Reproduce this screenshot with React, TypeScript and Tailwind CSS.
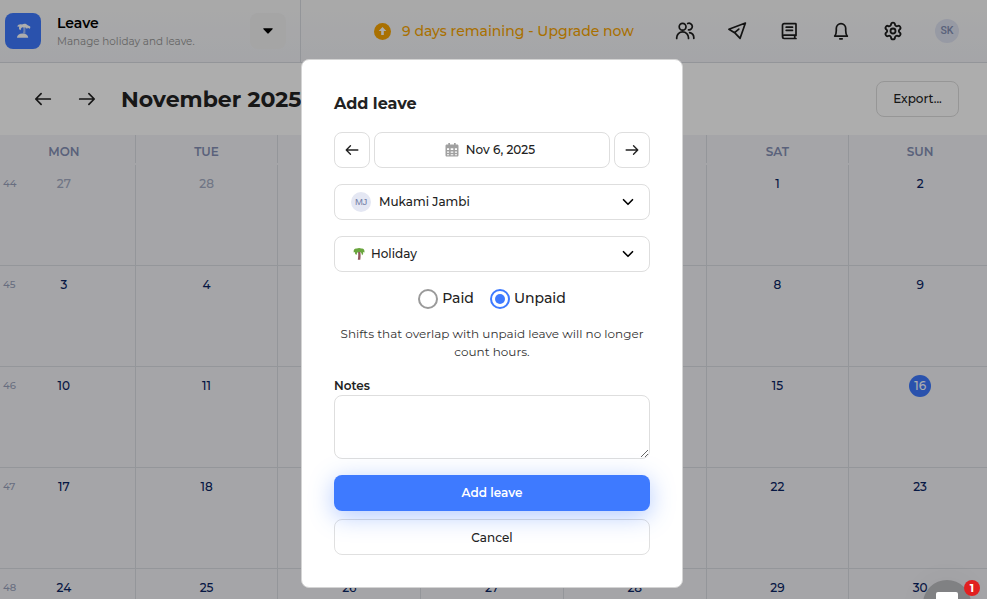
import React, { useState } from 'react';
import { ChevronDown, Settings } from 'lucide-react';

const DAYS = ['MON', 'TUE', 'WED', 'THU', 'FRI', 'SAT', 'SUN'];

const WEEKS = [
    { week: 44, days: [27, 28, 29, 30, 31, 1, 2] },
    { week: 45, days: [3, 4, 5, 6, 7, 8, 9] },
    { week: 46, days: [10, 11, 12, 13, 14, 15, 16] },
    { week: 47, days: [17, 18, 19, 20, 21, 22, 23] },
    { week: 48, days: [24, 25, 26, 27, 28, 29, 30] },
];

const TODAY = 16;

const NavIcon: React.FC<{ children: React.ReactNode }> = ({ children }) => (
    <svg
        className="h-5 w-5"
        viewBox="0 0 20 20"
        fill="none"
        stroke="currentColor"
        strokeWidth="1.7"
        strokeLinecap="round"
        strokeLinejoin="round"
    >
        {children}
    </svg>
);

const Arrow: React.FC<{ dir: 'left' | 'right'; className: string }> = ({ dir, className }) => (
    <svg className={className} viewBox="0 0 20 20" fill="none" stroke="currentColor" strokeWidth="1.7" strokeLinecap="round" strokeLinejoin="round">
        <path d={dir === 'left' ? 'M17.300 10H2.900M8.100 4.700L2.800 10l5.300 5.300' : 'M2.700 10h14.400M11.900 4.700l5.300 5.300-5.300 5.300'} />
    </svg>
);

const IslandIcon = () => (
    <svg className="h-[18px] w-[18px]" viewBox="0 0 18 18" fill="#fff">
        <path d="M3 15.800c0-2.600 2-4.200 5.600-4.200s5.600 1.600 5.600 4.200z" />
        <path d="M9.200 5.500h2.200v6H8.900c.6-2 .7-4 .3-6z" opacity=".5" />
        <path d="M9.600 5.700C8.700 4.900 7 5.300 6.600 8.200 5 7.600 4.500 6 5.400 4.700L3.200 4.500C4 2.500 6 1.700 8 2.500c2-1.400 4.600-.9 5.700.7l2.500 1.300c.3 1-.1 2-.6 2.300L13.700 5.700l-.6 1.400-1.600-1.700z" />
    </svg>
);

const PalmIcon = () => (
    <svg className="h-[14px] w-3" viewBox="0 0 12 14">
        <path d="M5 4.500h2.300c.4 2.800.4 5.400 0 8.300H4.800c.5-2.900.6-5.400.2-8.300z" fill="#90555c" />
        <path d="M6 5.200C4.900 4.400 4.100 5.600 3.400 8 1.900 7.400 1.700 6 2.200 5.100L.7 5.500C.2 2.600 1.900 1.100 3.900 1.600c1.100-.9 3.300-.9 4.400 0 2-.5 3.500 1.100 3.200 3.900l-1.600-.4c.6 1.100.4 2.500-.9 3.100C8.500 5.500 7.500 4.500 6 5.200z" fill="#6aa53e" />
    </svg>
);

const CalendarIcon = () => (
    <svg className="h-[14px] w-[14px]" viewBox="0 0 14 14" fill="#a0a0a0">
        <path
            fillRule="evenodd"
            d="M3.300 0h1.700v1.600h4V0h1.700v1.600H12.200c.8 0 1.300.6 1.300 1.300v9.400c0 .7-.5 1.300-1.300 1.300H1.800c-.8 0-1.300-.6-1.300-1.300V2.900c0-.7.5-1.300 1.300-1.300h1.500zM2 5.300v1.700h2.100V5.300zm3.700 0v1.700h2.600V5.300zm4.200 0v1.700H12V5.300zM2 8.500v1.300h2.100V8.500zm3.700 0v1.300h2.600V8.500zm4.200 0v1.300H12V8.500zM2 11.200v1.100h2.100v-1.100zm3.700 0v1.100h2.600v-1.100zm4.200 0v1.100H12v-1.100z"
        />
    </svg>
);

const Header = () => (
    <header className="flex h-[63px] border-b border-[#d9dce2] bg-linear-to-b from-[#fafafa] to-[#f3f4f8]">
        <div className="flex w-[301px] items-center border-r border-[#d9dce2] pl-[5px]">
            <div className="flex h-9 w-9 items-center justify-center rounded-lg bg-[#3e7aff]">
                <IslandIcon />
            </div>
            <div className="ml-4 flex-1 pt-0.5">
                <h1 className="text-sm leading-[18px] font-semibold text-black">Leave</h1>
                <p className="mt-0.5 text-[10.4px] leading-4 text-[#949494]">Manage holiday and leave.</p>
            </div>
            <button className="mr-[14px] flex h-9 w-9 items-center justify-center rounded-lg bg-[#f3f3f3]">
                <svg className="h-[6px] w-[10px]" viewBox="0 0 10 6">
                    <path d="M.8.3h8.400c.5 0 .7.5.3.9L5.700 5.300c-.4.5-1 .5-1.400 0L.5 1.200C.1.800.3.300.8.300z" />
                </svg>
            </button>
        </div>
        <div className="flex flex-1 items-center">
            <a className="ml-[73px] flex w-[301px] items-center gap-[11px] text-[#f9a602]">
                <svg className="h-[17px] w-[17px]" viewBox="0 0 17 17">
                    <circle cx="8.500" cy="8.500" r="8.500" fill="#f9a602" />
                    <path d="M8.500 4L4.700 7.900h2.500V12h2.600V7.900h2.500z" fill="#fff" />
                </svg>
                <span className="text-sm font-medium whitespace-nowrap">9 days remaining - Upgrade now</span>
            </a>
            <nav className="flex items-center gap-8 text-[#1c1c1c]">
                <NavIcon>
                    <circle cx="7.600" cy="5.700" r="3.400" />
                    <path d="M1.700 17.500v-.7a5.900 5.900 0 0 1 11.800 0v.7M12.700 2.500a3.300 3.300 0 1 1 .8 6.300M14.600 11.600a5.600 5.600 0 0 1 4.200 5.900" />
                </NavIcon>
                <NavIcon>
                    <path d="M18.400 2L1.900 8.200l5.700 3.500 5.500 5.600zM7.600 11.700l4.200-3.600" />
                </NavIcon>
                <NavIcon>
                    <path d="M3.500 15.600V4.200c0-.9.700-1.600 1.600-1.600h11.300c.4 0 .6.200.6.600v11.200M5.200 14.200H17M5.200 17.500H17M5.200 14.200a1.650 1.650 0 0 0 0 3.300M15.700 14.500v2.700M7.200 6.200h6.300M7.200 9.300h6.300" />
                </NavIcon>
                <NavIcon>
                    <path d="M3.700 15.200h12.600c-1.200-1.300-1.600-2.700-1.600-5.400V7.300a4.700 4.700 0 0 0-9.400 0v2.500c0 2.700-.4 4.100-1.600 5.400zM8.800 17.800h2.400" />
                </NavIcon>
                <Settings className="h-5 w-5" strokeWidth={2.200} />
            </nav>
            <div className="ml-8 flex h-6 w-6 items-center justify-center rounded-full bg-[#dfe3f2] font-[Roboto,sans-serif] text-[10.5px] font-medium text-[#8590b5]">
                SK
            </div>
        </div>
    </header>
);

const Calendar = () => (
    <div className="-ml-[7px] w-[999px] bg-[#f3f4f8]">
        <div className="grid h-7 grid-cols-7">
            {DAYS.map(day => (
                <div
                    key={day}
                    className="flex items-center justify-center border-r border-[#dadde3] pt-1.5 text-xs font-semibold text-[#8590b5]"
                >
                    {day}
                </div>
            ))}
        </div>
        <div className="mt-0.5">
            {WEEKS.map(({ week, days }, row) => (
                <div key={week} className="relative grid h-[101px] grid-cols-7 border-b border-[#dadde3]">
                    <span className="absolute top-[11px] left-[10px] text-[10px] leading-4 font-medium text-[#9aa3bd]">{week}</span>
                    {days.map(day => {
                        const outside = row === 0 && day > 7;
                        const today = row > 0 && day === TODAY;
                        return (
                            <div key={day} className="flex justify-center border-r border-[#dadde3] pt-2">
                                <span
                                    className={`flex h-[22px] w-[22px] items-center justify-center rounded-full text-xs font-medium ${today ? 'bg-[#3e7aff] text-white' : outside ? 'text-[#a5adc4]' : 'text-[#0a2463]'}`}
                                >
                                    {day}
                                </span>
                            </div>
                        );
                    })}
                </div>
            ))}
        </div>
    </div>
);

const Radio: React.FC<{ label: string; checked: boolean; onChange: () => void }> = ({ label, checked, onChange }) => (
    <label className="flex items-center gap-1 text-sm leading-5">
        <button
            type="button"
            role="radio"
            aria-checked={checked}
            onClick={onChange}
            className={`flex h-5 w-5 items-center justify-center rounded-full border-2 ${checked ? 'border-[#3e7aff]' : 'border-[#9a9a9a]'}`}
        >
            {checked && <span className="h-[10px] w-[10px] rounded-full bg-[#3e7aff]" />}
        </button>
        <span className="-mt-0.5">{label}</span>
    </label>
);

const AddLeaveModal = () => {
    const [type, setType] = useState('unpaid');

    return (
        <div className="h-[529px] w-[382px] rounded-lg border border-[#d4d4d4] bg-white px-8 pt-[34px] text-xs font-medium text-[#222]">
            <h2 className="text-base leading-5 font-bold">Add leave</h2>

            {/* Date picker */}
            <div className="mt-[18px] flex gap-1">
                <button className="flex h-9 w-9 items-center justify-center rounded-lg border border-[#dedede]">
                    <Arrow dir="left" className="h-4 w-4" />
                </button>
                <button className="flex h-9 flex-1 items-center justify-center gap-[7px] rounded-lg border border-[#dedede] pr-1">
                    <CalendarIcon />
                    Nov 6, 2025
                </button>
                <button className="flex h-9 w-9 items-center justify-center rounded-lg border border-[#dedede]">
                    <Arrow dir="right" className="h-4 w-4" />
                </button>
            </div>

            <button className="mt-4 flex h-9 w-full items-center rounded-lg border border-[#dedede] pr-3 pl-4">
                <span className="mr-2 flex h-5 w-5 items-center justify-center rounded-full bg-[#e4e7f3] font-[Liberation_Sans,sans-serif] text-[9.5px] tracking-[-0.03em] text-[#737fa8]">
                    MJ
                </span>
                <span className="flex-1 text-left">Mukami Jambi</span>
                <ChevronDown className="-mt-px h-[18px] w-[18px] text-black" strokeWidth={2.200} />
            </button>

            <button className="mt-4 flex h-9 w-full items-center rounded-lg border border-[#dedede] pr-3 pl-[18px]">
                <PalmIcon />
                <span className="ml-1.5 flex-1 text-left">Holiday</span>
                <ChevronDown className="-mt-px h-[18px] w-[18px] text-black" strokeWidth={2.200} />
            </button>

            <div className="mt-[17px] flex h-5 justify-center gap-4">
                <Radio label="Paid" checked={type === 'paid'} onChange={() => setType('paid')} />
                <Radio label="Unpaid" checked={type === 'unpaid'} onChange={() => setType('unpaid')} />
            </div>

            <p className="mt-4 text-center leading-[18px] font-normal text-[#333]">
                Shifts that overlap with unpaid leave will no longer
                <br />
                count hours.
            </p>

            <label className="mt-4 block leading-[18px] font-semibold">Notes</label>
            <textarea className="block h-16 w-full rounded-lg border border-[#dedede]" />

            <button className="mt-4 block h-9 w-full rounded-lg bg-[#3e7aff] font-semibold text-white shadow-[0_5px_25px_rgba(62,122,255,0.4)]">
                Add leave
            </button>
            <button className="relative mt-2 block h-9 w-full rounded-lg border border-black/12 pt-px">Cancel</button>
        </div>
    );
};

export default function App() {
    return (
        <div className="relative h-[599px] w-[987px] overflow-hidden bg-white font-[Montserrat,Inter,sans-serif]">
            <Header />
            <div className="flex h-[72px] items-center pr-7 pl-[33px] text-[#222]">
                <Arrow dir="left" className="h-5 w-5" />
                <Arrow dir="right" className="ml-6 h-5 w-5" />
                <h2 className="ml-6 flex-1 text-[22px] font-bold">November 2025</h2>
                <button className="h-9 w-[83px] rounded-lg border border-[#dedede] text-xs font-medium">Export...</button>
            </div>
            <Calendar />

            <div className="absolute inset-0 flex justify-center bg-black/32 pt-[59px] pr-[3px]">
                <AddLeaveModal />
            </div>

            {/* Chat launcher */}
            <div className="absolute top-[580px] left-[923px] flex h-12 w-12 justify-center rounded-full bg-[#808183] pt-3 shadow-[0_2px_30px_rgba(0,0,0,0.06)]">
                <div className="h-6 w-[22px] rounded-xs bg-white" />
                <span className="absolute top-0 left-[41px] flex h-4 w-4 items-center justify-center rounded-full bg-[#e12020] text-[11px] font-bold text-white">
                    1
                </span>
            </div>
        </div>
    );
}
